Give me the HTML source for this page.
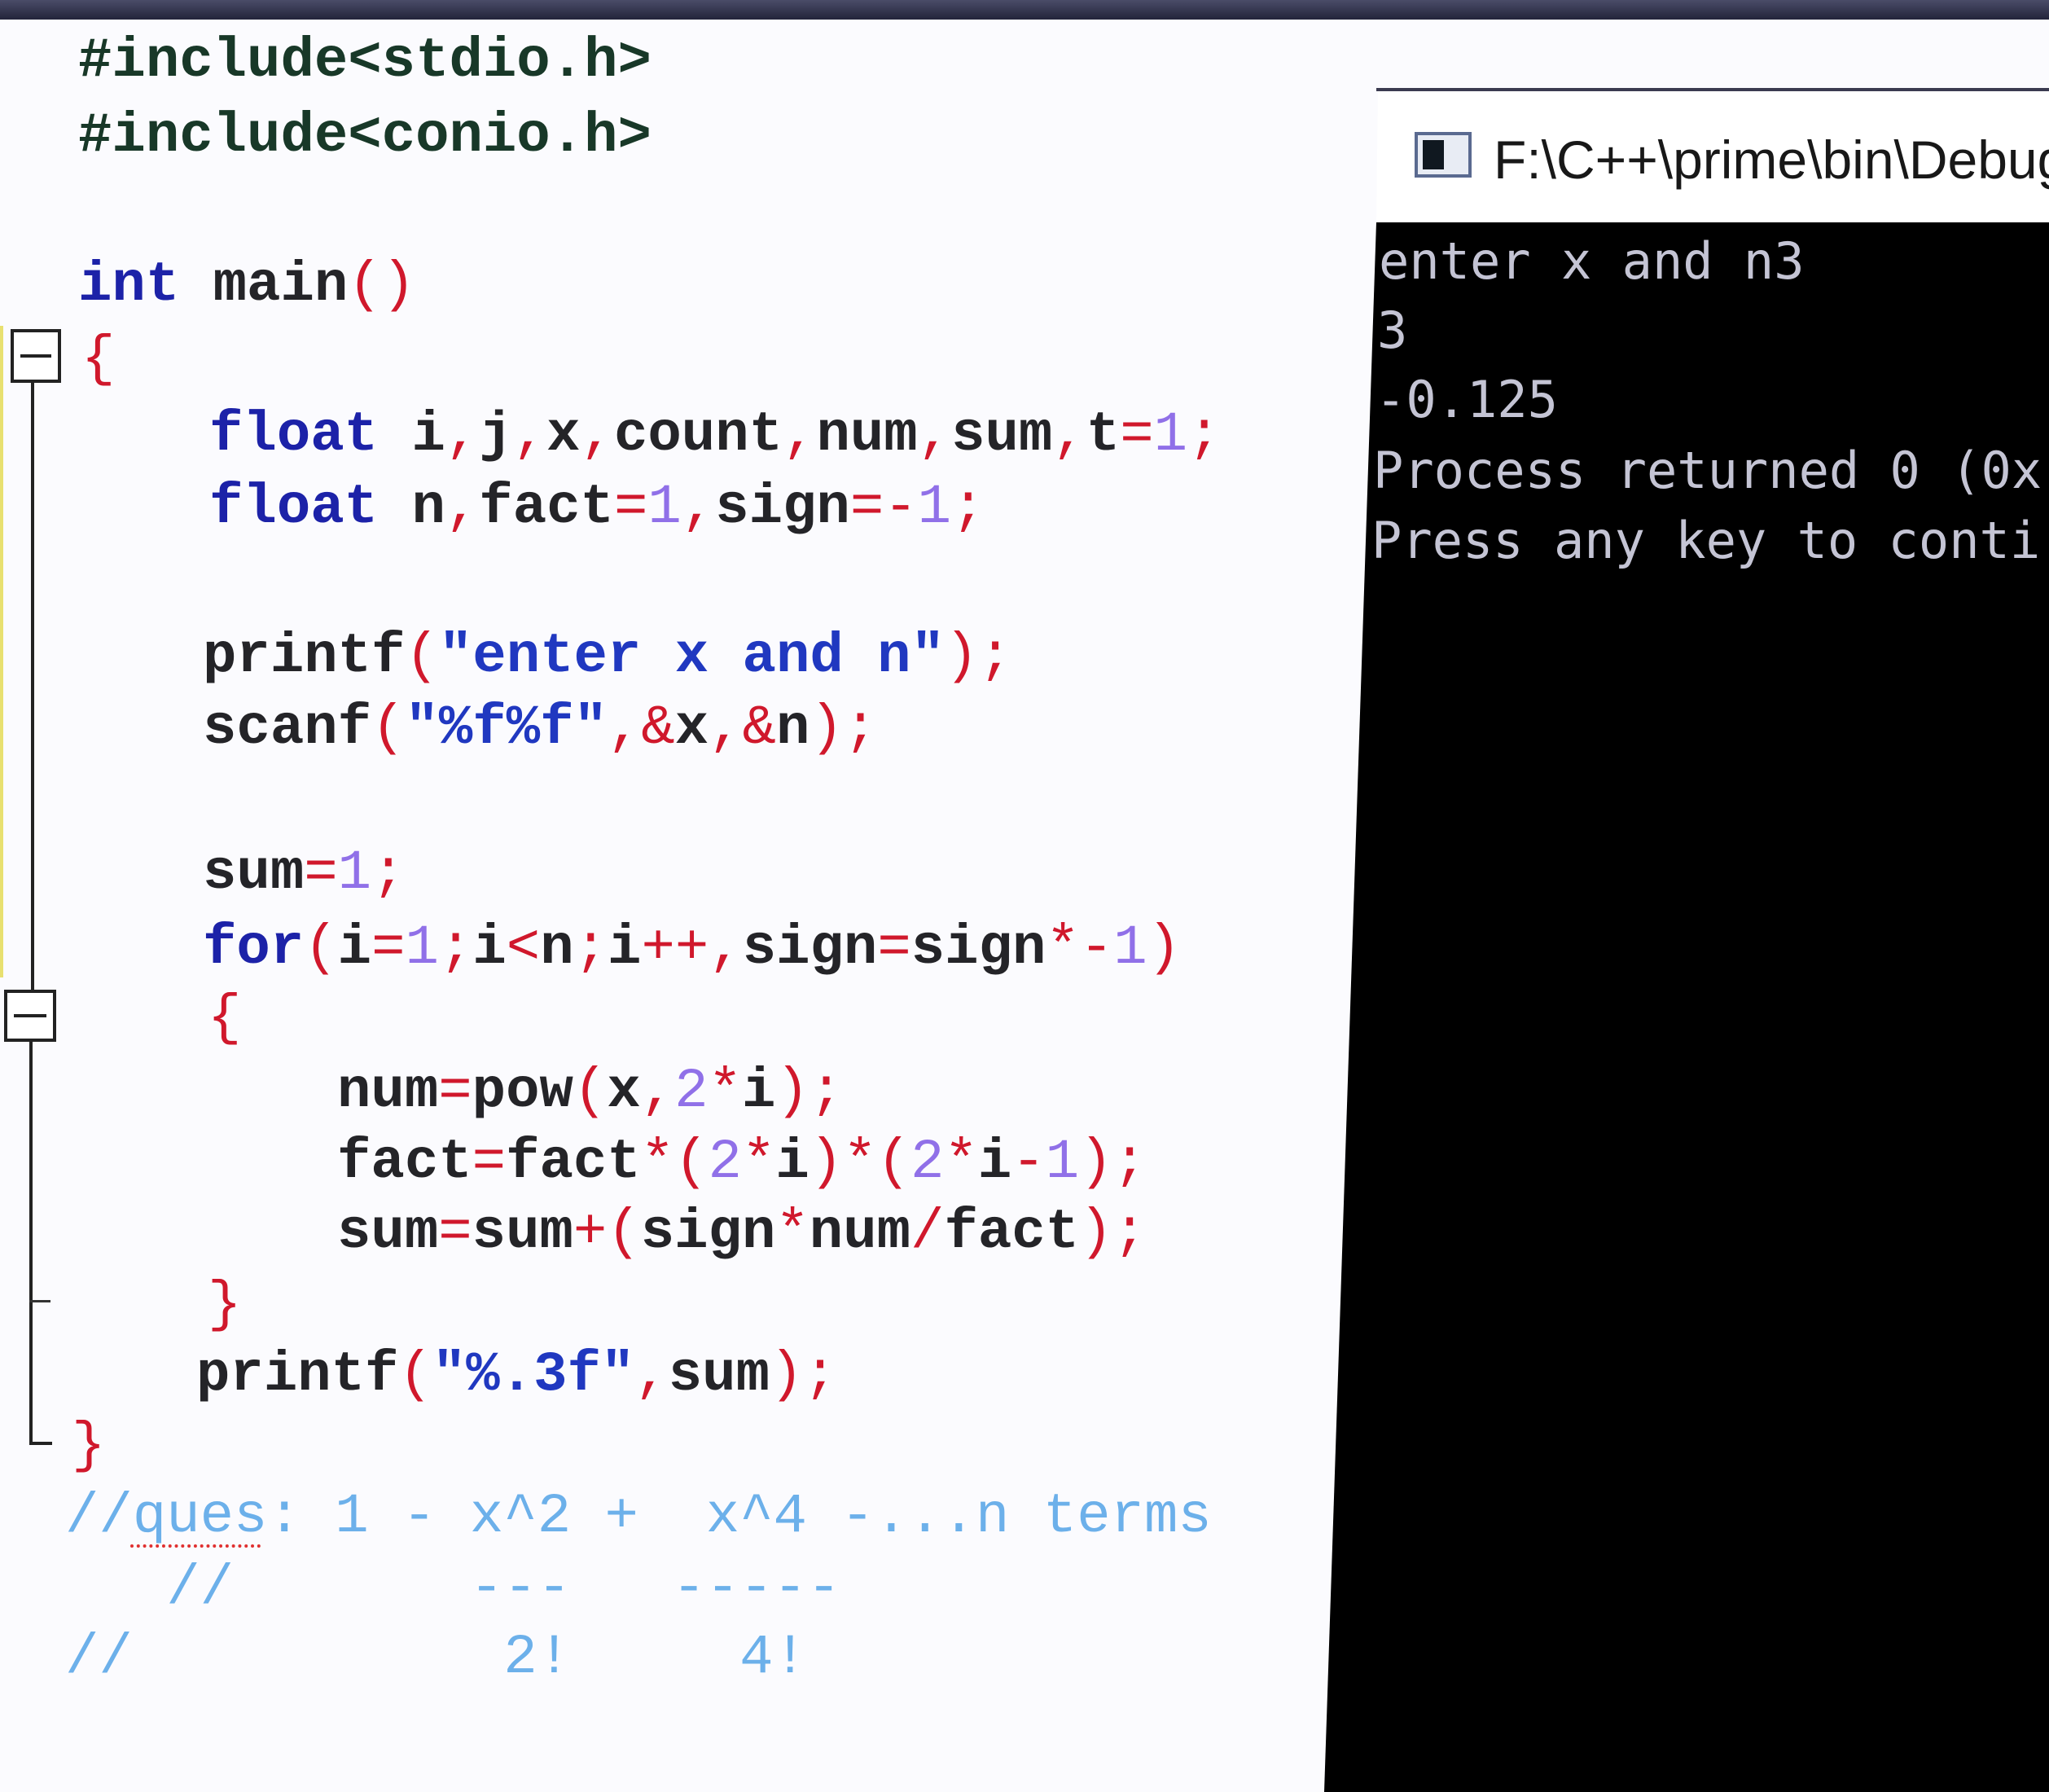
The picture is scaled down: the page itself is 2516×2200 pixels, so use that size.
<!DOCTYPE html>
<html><head><meta charset="utf-8"><style>
html,body{margin:0;padding:0;}
body{width:2516px;height:2200px;position:relative;overflow:hidden;background:#fbfbfe;}
.topbar{position:absolute;left:0;top:0;width:2516px;height:24px;background:linear-gradient(#4a4c68,#23243a);}
.l{position:absolute;margin:0;font-family:"Liberation Mono",monospace;font-size:69px;line-height:88px;height:88px;white-space:pre;font-weight:bold;color:#242428;}
.k{color:#1c22a8}.p{color:#d0182c;font-weight:normal}.n{color:#9070e8;font-weight:normal}.s{color:#2038c0}.g{color:#183828}
.c{color:#6cb0ea;font-weight:normal}
.con{position:absolute;left:0;top:0;width:2516px;height:2200px;background:#000;clip-path:polygon(1690px 273px,2516px 273px,2516px 2200px,1626px 2200px);}
.title{position:absolute;background:#fff;clip-path:polygon(1692px 110px,2516px 110px,2516px 275px,1690px 275px);left:0;top:0;width:2516px;height:2200px;}
.tb{position:absolute;left:1690px;top:108px;width:830px;height:4px;background:#3a3a50;}
.tt{position:absolute;left:1834px;top:158px;font-family:"Liberation Sans",sans-serif;font-size:66px;color:#181818;white-space:pre;}
.ico{position:absolute;left:1737px;top:162px;width:70px;height:56px;border:4px solid #5a6a90;background:#e8ecf4;box-sizing:border-box;}
.ico::before{content:"";position:absolute;left:6px;top:6px;width:26px;height:36px;background:#101820;}
.ct{position:absolute;font-family:"DejaVu Sans Mono","Liberation Mono",monospace;font-size:62px;color:#c4c4d4;white-space:pre;line-height:80px;}
.fold{position:absolute;border:4px solid #222;background:#fff;box-sizing:border-box;}
.fold::after{content:"";position:absolute;left:8px;right:8px;top:50%;height:4px;margin-top:-2px;background:#222;}
</style></head><body>
<div class="topbar"></div>
<div class="l g" style="left:96px;top:31px">#include&lt;stdio.h&gt;</div>
<div class="l g" style="left:96px;top:123px">#include&lt;conio.h&gt;</div>
<div class="l" style="left:96px;top:306px"><span class="k">int</span> main<span class="p">()</span></div>
<div class="l p" style="left:100px;top:397px">{</div>
<div class="l" style="left:257px;top:490px"><span class="k">float</span> i<span class="p">,</span>j<span class="p">,</span>x<span class="p">,</span>count<span class="p">,</span>num<span class="p">,</span>sum<span class="p">,</span>t<span class="p">=</span><span class="n">1</span><span class="p">;</span></div>
<div class="l" style="left:257px;top:579px"><span class="k">float</span> n<span class="p">,</span>fact<span class="p">=</span><span class="n">1</span><span class="p">,</span>sign<span class="p">=-</span><span class="n">1</span><span class="p">;</span></div>
<div class="l" style="left:249px;top:762px">printf<span class="p">(</span><span class="s">"enter x and n"</span><span class="p">);</span></div>
<div class="l" style="left:249px;top:850px">scanf<span class="p">(</span><span class="s">"%f%f"</span><span class="p">,&amp;</span>x<span class="p">,&amp;</span>n<span class="p">);</span></div>
<div class="l" style="left:249px;top:1028px">sum<span class="p">=</span><span class="n">1</span><span class="p">;</span></div>
<div class="l" style="left:249px;top:1120px"><span class="k">for</span><span class="p">(</span>i<span class="p">=</span><span class="n">1</span><span class="p">;</span>i<span class="p">&lt;</span>n<span class="p">;</span>i<span class="p">++,</span>sign<span class="p">=</span>sign<span class="p">*-</span><span class="n">1</span><span class="p">)</span></div>
<div class="l p" style="left:255px;top:1206px">{</div>
<div class="l" style="left:414px;top:1296px">num<span class="p">=</span>pow<span class="p">(</span>x<span class="p">,</span><span class="n">2</span><span class="p">*</span>i<span class="p">);</span></div>
<div class="l" style="left:414px;top:1383px">fact<span class="p">=</span>fact<span class="p">*(</span><span class="n">2</span><span class="p">*</span>i<span class="p">)*(</span><span class="n">2</span><span class="p">*</span>i<span class="p">-</span><span class="n">1</span><span class="p">);</span></div>
<div class="l" style="left:414px;top:1469px">sum<span class="p">=</span>sum<span class="p">+(</span>sign<span class="p">*</span>num<span class="p">/</span>fact<span class="p">);</span></div>
<div class="l p" style="left:255px;top:1558px">}</div>
<div class="l" style="left:241px;top:1644px">printf<span class="p">(</span><span class="s">"%.3f"</span><span class="p">,</span>sum<span class="p">);</span></div>
<div class="l p" style="left:88px;top:1731px">}</div>
<div class="l c" style="left:80px;top:1818px">//ques: 1 - x^2 +  x^4 -...n terms</div>
<div class="l c" style="left:80px;top:1906px">   //       ---   -----</div>
<div class="l c" style="left:80px;top:1991px">//           2!     4!</div>
<div style="position:absolute;left:160px;top:1890px;width:160px;height:6px;border-bottom:4px dotted #e03030"></div>
<!-- fold gutter -->
<div style="position:absolute;left:38px;top:470px;width:4px;height:745px;background:#222"></div>
<div style="position:absolute;left:36px;top:1279px;width:4px;height:494px;background:#222"></div>
<div style="position:absolute;left:36px;top:1596px;width:26px;height:3px;background:#333"></div>
<div style="position:absolute;left:36px;top:1770px;width:28px;height:4px;background:#222"></div>
<div class="fold" style="left:13px;top:404px;width:62px;height:66px"></div>
<div class="fold" style="left:5px;top:1215px;width:64px;height:64px"></div>
<div style="position:absolute;left:0;top:400px;width:4px;height:800px;background:#e8e070"></div>
<!-- console -->
<div class="title"></div>
<div class="tb"></div>
<div class="ico"></div>
<div class="tt">F:\C++\prime\bin\Debug</div>
<div class="con"></div>
<div class="ct" style="left:1693px;top:281px">enter x and n3</div>
<div class="ct" style="left:1691px;top:366px">3</div>
<div class="ct" style="left:1689px;top:451px">-0.125</div>
<div class="ct" style="left:1686px;top:538px">Process returned 0 (0x</div>
<div class="ct" style="left:1684px;top:624px">Press any key to conti</div>
</body></html>
